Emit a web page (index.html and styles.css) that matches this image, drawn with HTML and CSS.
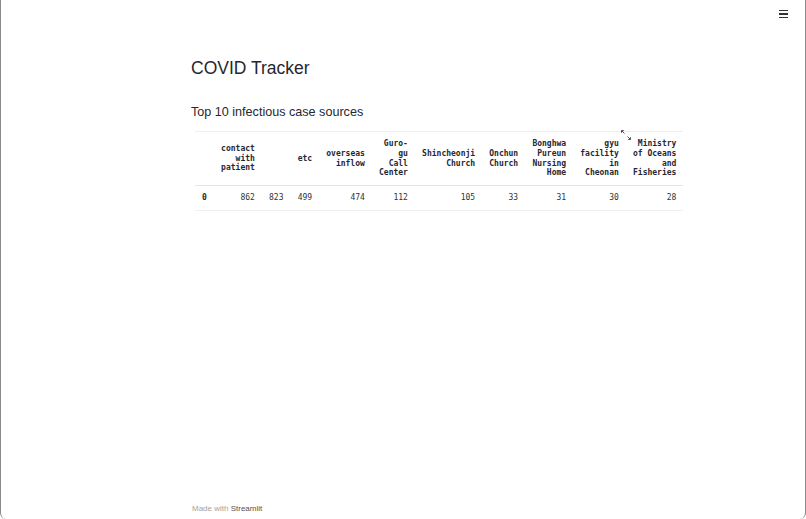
FILE: index.html
```html
<!DOCTYPE html>
<html>
<head>
<meta charset="utf-8">
<link rel="stylesheet" href="styles.css">
</head>
<body>
<div class="window">
  <header class="topbar">
    <div class="menu" aria-label="menu">
      <span></span><span></span><span></span>
    </div>
  </header>
  <main class="main">
    <h1 class="title">COVID Tracker</h1>
    <h3 class="subtitle">Top 10 infectious case sources</h3>
    <div class="frame">
      <svg class="fullscreen" width="10" height="10" viewBox="0 0 10 10">
        <path d="M0.5 0.5 L3.5 3.5 M0.5 0.5 L0.5 2.8 M0.5 0.5 L2.8 0.5" stroke="#555" stroke-width="1" fill="none"/>
        <path d="M9.5 9.5 L6.5 6.5 M9.5 9.5 L9.5 7.2 M9.5 9.5 L7.2 9.5" stroke="#555" stroke-width="1" fill="none"/>
      </svg>
      <table class="df">
        <thead>
          <tr>
            <th class="idx"></th>
            <th>contact<br>with<br>patient</th>
            <th></th>
            <th>etc</th>
            <th>overseas<br>inflow</th>
            <th>Guro-<br>gu<br>Call<br>Center</th>
            <th>Shincheonji<br>Church</th>
            <th>Onchun<br>Church</th>
            <th>Bonghwa<br>Pureun<br>Nursing<br>Home</th>
            <th>gyu<br>facility<br>in<br>Cheonan</th>
            <th>Ministry<br>of Oceans<br>and<br>Fisheries</th>
          </tr>
        </thead>
        <tbody>
          <tr>
            <th class="idx">0</th>
            <td>862</td>
            <td>823</td>
            <td>499</td>
            <td>474</td>
            <td>112</td>
            <td>105</td>
            <td>33</td>
            <td>31</td>
            <td>30</td>
            <td>28</td>
          </tr>
        </tbody>
      </table>
    </div>
  </main>
  <footer class="footer">Made with <span class="brand">Streamlit</span></footer>
</div>
</body>
</html>
```
FILE: styles.css
```css
html, body {
  margin: 0;
  padding: 0;
  background: #fff;
}
.window {
  box-sizing: border-box;
  height: 519px;
  border-left: 1px solid #8a8a8a;
  border-right: 1px solid #8a8a8a;
  border-bottom-left-radius: 6px;
  border-bottom-right-radius: 6px;
  display: flex;
  flex-direction: column;
  font-family: "Liberation Sans", Arial, sans-serif;
  color: #262730;
  overflow: hidden;
}
.topbar {
  height: 30px;
  display: flex;
  justify-content: flex-end;
  padding: 10px 17px 0 0;
  box-sizing: border-box;
}
.menu {
  width: 9px;
  height: 8px;
  display: flex;
  flex-direction: column;
  justify-content: space-between;
}
.menu span {
  display: block;
  height: 1.2px;
  background: #333;
}
.main {
  flex: 1;
  padding-left: 190px;
}
.title {
  margin: 28px 0 0 0;
  font-size: 17.5px;
  font-weight: 400;
  line-height: 21px;
}
.subtitle {
  margin: 26px 0 0 0;
  font-size: 12.6px;
  font-weight: 400;
  line-height: 15px;
}
.frame {
  position: relative;
  margin: 11px 0 0 4px;
  display: inline-block;
}
.fullscreen {
  position: absolute;
  right: 52px;
  top: -1px;
}
.df {
  border-collapse: collapse;
  font-family: "DejaVu Sans Mono", monospace;
  font-size: 8px;
  line-height: 9.75px;
  color: #262730;
}
.df th, .df td {
  padding: 7px 7.1px;
  text-align: right;
  vertical-align: middle;
  white-space: nowrap;
}
.df thead th {
  border-top: 1px solid #eceef2;
  border-bottom: 1px solid #e3e5ea;
  font-weight: 700;
}
.df tbody th, .df tbody td {
  border-bottom: 1px solid #eceef2;
}
.df tbody td {
  font-weight: 400;
  color: #333;
}
.df .idx {
  text-align: left;
  font-weight: 700;
}
.footer {
  padding: 0 0 5px 191px;
  font-size: 8px;
  color: #a3a3a3;
  line-height: 10px;
}
.brand {
  color: #555;
}
```
